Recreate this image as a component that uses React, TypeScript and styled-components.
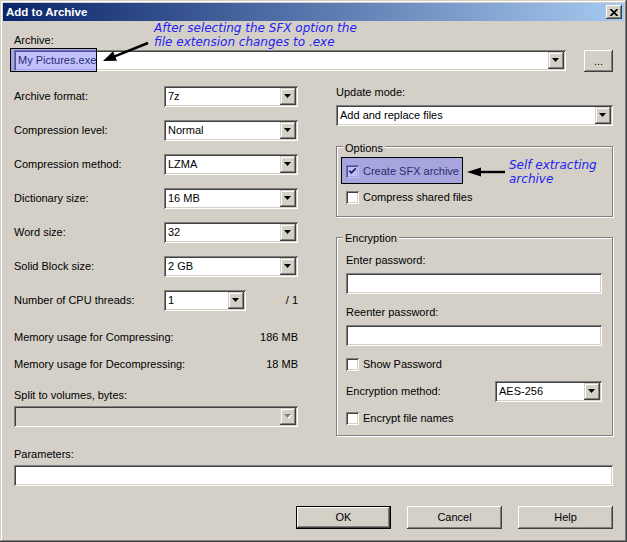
import React from 'react';
import styled, { createGlobalStyle, css } from 'styled-components';

const FACE = '#d4d0c8';
const SHADOW = '#808080';
const DARK = '#404040';
const NOTE_BLUE = '#2323f5';

const GlobalStyle = createGlobalStyle`
  html, body {
    margin: 0;
    padding: 0;
    background: ${FACE};
  }
  body {
    font-family: 'Liberation Sans', Arial, sans-serif;
    font-size: 11px;
    color: #000;
  }
  * {
    box-sizing: border-box;
  }
`;

const sunken = css`
  box-shadow:
    inset 1px 1px 0 ${SHADOW},
    inset -1px -1px 0 #fff,
    inset 2px 2px 0 ${DARK},
    inset -2px -2px 0 ${FACE};
`;

const raised = css`
  box-shadow:
    inset -1px -1px 0 ${DARK},
    inset 1px 1px 0 #fff,
    inset -2px -2px 0 ${SHADOW},
    inset 2px 2px 0 ${FACE};
`;

const raisedLight = css`
  box-shadow:
    inset -1px -1px 0 ${DARK},
    inset 1px 1px 0 ${FACE},
    inset -2px -2px 0 ${SHADOW},
    inset 2px 2px 0 #fff;
`;

const Window = styled.div`
  position: relative;
  width: 627px;
  height: 542px;
  padding: 3px;
  display: flex;
  flex-direction: column;
  background: ${FACE};
  box-shadow:
    inset -1px -1px 0 ${DARK},
    inset 1px 1px 0 ${FACE},
    inset -2px -2px 0 ${SHADOW},
    inset 2px 2px 0 #fff;
`;

const TitleBar = styled.div`
  height: 18px;
  flex: none;
  display: flex;
  align-items: center;
  justify-content: space-between;
  padding: 0 2px 0 3px;
  background: linear-gradient(to right, #0a246a, #a6caf0);
`;

const Title = styled.span`
  color: #fff;
  font-weight: 700;
  font-size: 11.5px;
  line-height: 18px;
`;

const CloseButton = styled.div`
  width: 16px;
  height: 14px;
  display: flex;
  align-items: center;
  justify-content: center;
  background: ${FACE};
  ${raised}
`;

const Body = styled.div`
  flex: 1;
  display: flex;
  flex-direction: column;
  padding: 0 11px;
`;

const Label = styled.div<{ $gap?: number }>`
  line-height: 13px;
  height: 13px;
  margin-top: ${(p) => p.$gap ?? 0}px;
  white-space: nowrap;
`;

const ArchiveRow = styled.div`
  display: flex;
  align-items: flex-start;
  gap: 18px;
  margin-top: 3px;
  height: 22px;
`;

const Combo = styled.div<{ $width?: number; $disabled?: boolean }>`
  display: flex;
  flex: ${(p) => (p.$width ? 'none' : '1')};
  width: ${(p) => (p.$width ? `${p.$width}px` : 'auto')};
  height: 21px;
  padding: 2px;
  background: ${(p) => (p.$disabled ? FACE : '#fff')};
  ${sunken}
`;

const ComboText = styled.div`
  flex: 1;
  padding-left: 2px;
  line-height: 17px;
  white-space: nowrap;
  overflow: hidden;
`;

const DropButton = styled.div`
  width: 16px;
  flex: none;
  display: flex;
  align-items: center;
  justify-content: center;
  background: ${FACE};
  ${raisedLight}
`;

const Button = styled.div<{ $width: number; $height: number; $default?: boolean }>`
  width: ${(p) => p.$width}px;
  height: ${(p) => p.$height}px;
  flex: none;
  display: flex;
  align-items: center;
  justify-content: center;
  background: ${FACE};
  line-height: 13px;
  ${(p) =>
    p.$default
      ? css`
          box-shadow:
            inset 0 0 0 1px #000,
            inset -2px -2px 0 ${DARK},
            inset 2px 2px 0 #fff,
            inset -3px -3px 0 ${SHADOW},
            inset 3px 3px 0 ${FACE};
        `
      : raised}
`;

const Columns = styled.div`
  display: flex;
  gap: 38px;
  margin-top: 14px;
`;

const LeftColumn = styled.div`
  width: 284px;
  flex: none;
  display: flex;
  flex-direction: column;
`;

const RightColumn = styled.div`
  flex: 1;
  display: flex;
  flex-direction: column;
`;

const FormRows = styled.div`
  display: flex;
  flex-direction: column;
  gap: 13px;
`;

const FormRow = styled.div<{ $gap?: number }>`
  display: flex;
  align-items: center;
  height: 21px;
  margin-top: ${(p) => p.$gap ?? 0}px;
`;

const RowLabel = styled.span<{ $width?: number }>`
  flex: ${(p) => (p.$width ? 'none' : '1')};
  width: ${(p) => (p.$width ? `${p.$width}px` : 'auto')};
  line-height: 13px;
  white-space: nowrap;
`;

const RowSuffix = styled.span`
  flex: 1;
  text-align: right;
  line-height: 13px;
`;

const InfoRow = styled.div<{ $gap: number }>`
  display: flex;
  justify-content: space-between;
  line-height: 13px;
  margin-top: ${(p) => p.$gap}px;
`;

const SplitCombo = styled.div`
  margin-top: 4px;
  display: flex;
`;

const Group = styled.div<{ $gap: number; $top: number; $bottom: number }>`
  position: relative;
  margin-top: ${(p) => p.$gap}px;
  padding: ${(p) => p.$top}px 10px ${(p) => p.$bottom}px 9px;
  border: 1px solid ${SHADOW};
  box-shadow:
    inset 1px 1px 0 #fff,
    1px 1px 0 #fff;
  display: flex;
  flex-direction: column;
`;

const Legend = styled.span<{ $top: number }>`
  position: absolute;
  top: ${(p) => p.$top}px;
  left: 6px;
  padding: 0 2px;
  background: ${FACE};
  line-height: 13px;
`;

const CheckRow = styled.div<{ $gap?: number }>`
  display: flex;
  align-items: center;
  gap: 4px;
  height: 13px;
  line-height: 13px;
  margin-top: ${(p) => p.$gap ?? 0}px;
  white-space: nowrap;
`;

const CheckBox = styled.span`
  width: 13px;
  height: 13px;
  flex: none;
  display: inline-flex;
  align-items: center;
  justify-content: center;
  background: #fff;
  ${sunken}
`;

const TextField = styled.div<{ $gap: number }>`
  height: 21px;
  margin-top: ${(p) => p.$gap}px;
  background: #fff;
  ${sunken}
`;

const ButtonRow = styled.div`
  display: flex;
  justify-content: flex-end;
  gap: 16px;
  margin-top: 20px;
`;

const Highlight = styled.div<{ $x: number; $y: number; $w: number; $h: number }>`
  position: absolute;
  left: ${(p) => p.$x}px;
  top: ${(p) => p.$y}px;
  width: ${(p) => p.$w}px;
  height: ${(p) => p.$h}px;
  border: 1px solid #000;
  background: rgba(100, 100, 255, 0.4);
`;

const Note = styled.div<{ $x: number; $y: number }>`
  position: absolute;
  left: ${(p) => p.$x}px;
  top: ${(p) => p.$y}px;
  font-family: 'DejaVu Sans', Verdana, sans-serif;
  font-style: italic;
  font-size: 12px;
  line-height: 14px;
  color: ${NOTE_BLUE};
  white-space: nowrap;
`;

const ArrowArt = styled.svg<{ $x: number; $y: number }>`
  position: absolute;
  left: ${(p) => p.$x}px;
  top: ${(p) => p.$y}px;
  overflow: visible;
`;

function DownArrow({ disabled }: { disabled?: boolean }) {
  return (
    <svg width="8" height="5" viewBox="0 0 8 5">
      {disabled && <polygon points="1,1 8,1 4.5,5" fill="#fff" />}
      <polygon points="0,0 7,0 3.5,4" fill={disabled ? SHADOW : '#000'} />
    </svg>
  );
}

function ComboBox({ value, width, disabled }: { value?: string; width?: number; disabled?: boolean }) {
  return (
    <Combo $width={width} $disabled={disabled}>
      <ComboText>{value}</ComboText>
      <DropButton>
        <DownArrow disabled={disabled} />
      </DropButton>
    </Combo>
  );
}

function Check({ checked, label, gap }: { checked?: boolean; label: string; gap?: number }) {
  return (
    <CheckRow $gap={gap}>
      <CheckBox>
        {checked && (
          <svg width="9" height="9" viewBox="0 0 9 9">
            <path d="M1.2 3.6 L3.4 5.9 L7.8 1.4" stroke="#000" strokeWidth="1.9" fill="none" />
          </svg>
        )}
      </CheckBox>
      {label}
    </CheckRow>
  );
}

const LEFT_ROWS = [
  { label: 'Archive format:', value: '7z' },
  { label: 'Compression level:', value: 'Normal' },
  { label: 'Compression method:', value: 'LZMA' },
  { label: 'Dictionary size:', value: '16 MB' },
  { label: 'Word size:', value: '32' },
  { label: 'Solid Block size:', value: '2 GB' },
];

export default function App() {
  return (
    <>
      <GlobalStyle />
      <Window>
        <TitleBar>
          <Title>Add to Archive</Title>
          <CloseButton>
            <svg width="8" height="7" viewBox="0 0 8 7">
              <path d="M0.5 0 L7.5 7 M7.5 0 L0.5 7" stroke="#000" strokeWidth="1.7" />
            </svg>
          </CloseButton>
        </TitleBar>
        <Body>
          <Label $gap={13}>Archive:</Label>
          <ArchiveRow>
            <ComboBox value="My Pictures.exe" />
            <Button $width={29} $height={22}>...</Button>
          </ArchiveRow>

          <Columns>
            <LeftColumn>
              <FormRows>
                {LEFT_ROWS.map((row) => (
                  <FormRow key={row.label}>
                    <RowLabel $width={150}>{row.label}</RowLabel>
                    <ComboBox value={row.value} width={134} />
                  </FormRow>
                ))}
                <FormRow>
                  <RowLabel $width={150}>Number of CPU threads:</RowLabel>
                  <ComboBox value="1" width={82} />
                  <RowSuffix>/ 1</RowSuffix>
                </FormRow>
              </FormRows>
              <InfoRow $gap={20}>
                <span>Memory usage for Compressing:</span>
                <span>186 MB</span>
              </InfoRow>
              <InfoRow $gap={14}>
                <span>Memory usage for Decompressing:</span>
                <span>18 MB</span>
              </InfoRow>
              <Label $gap={18}>Split to volumes, bytes:</Label>
              <SplitCombo>
                <ComboBox disabled />
              </SplitCombo>
            </LeftColumn>

            <RightColumn>
              <Label>Update mode:</Label>
              <FormRow $gap={6}>
                <ComboBox value="Add and replace files" />
              </FormRow>

              <Group $gap={20} $top={18} $bottom={12}>
                <Legend $top={-5}>Options</Legend>
                <Check checked label="Create SFX archive" />
                <Check label="Compress shared files" gap={13} />
              </Group>

              <Group $gap={20} $top={16} $bottom={10}>
                <Legend $top={-6}>Encryption</Legend>
                <Label>Enter password:</Label>
                <TextField $gap={6} />
                <Label $gap={12}>Reenter password:</Label>
                <TextField $gap={6} />
                <Check label="Show Password" gap={12} />
                <FormRow $gap={10}>
                  <RowLabel>Encryption method:</RowLabel>
                  <ComboBox value="AES-256" width={107} />
                </FormRow>
                <Check label="Encrypt file names" gap={10} />
              </Group>
            </RightColumn>
          </Columns>

          <Label $gap={12}>Parameters:</Label>
          <TextField $gap={4} />

          <ButtonRow>
            <Button $width={95} $height={23} $default>OK</Button>
            <Button $width={95} $height={23}>Cancel</Button>
            <Button $width={95} $height={23}>Help</Button>
          </ButtonRow>
        </Body>

        <Highlight $x={10} $y={48} $w={87} $h={24} />
        <Highlight $x={341} $y={157} $w={122} $h={27} />

        <Note $x={154} $y={21}>
          After selecting the SFX option the
          <br />
          file extension changes to .exe
        </Note>
        <Note $x={509} $y={158}>
          Self extracting
          <br />
          archive
        </Note>

        <ArrowArt $x={95} $y={38} width="60" height="30" viewBox="0 0 60 30">
          <line x1="53" y1="5" x2="19" y2="18.6" stroke="#000" strokeWidth="2.6" />
          <polygon points="8,23 22,22.8 18,13.3" fill="#000" />
        </ArrowArt>
        <ArrowArt $x={465} $y={166} width="42" height="12" viewBox="0 0 42 12">
          <line x1="14" y1="6" x2="40" y2="6" stroke="#000" strokeWidth="2.4" />
          <polygon points="2,6 16,1.5 16,10.5" fill="#000" />
        </ArrowArt>
      </Window>
    </>
  );
}
